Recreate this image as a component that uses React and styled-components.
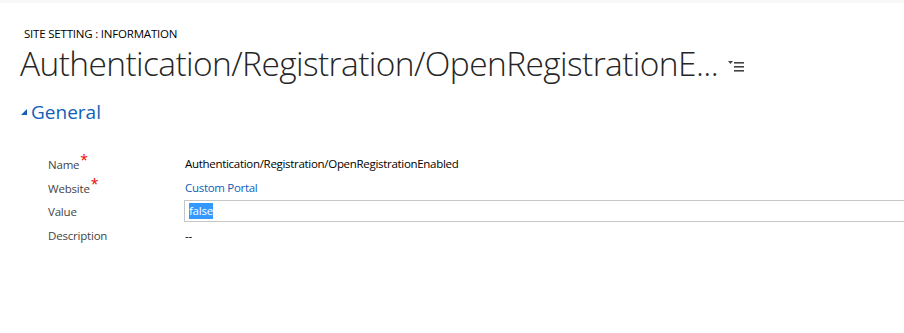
import React from "react";
import styled, { createGlobalStyle } from "styled-components";

const Global = createGlobalStyle`
  html, body { margin: 0; padding: 0; background: #fff; }
  body { font-family: "Segoe UI", "Open Sans", "Liberation Sans", sans-serif; overflow: hidden; }
`;

const Page = styled.div`
  width: 904px;
  height: 333px;
  overflow: hidden;
  background: #fff;
`;

const TopStrip = styled.div`
  height: 3px;
  background: #f8f8f8;
`;

const Header = styled.header`
  padding: 25px 0 0 20px;
`;

const Breadcrumb = styled.div`
  font-size: 11.5px;
  color: #000;
  padding-left: 4px;
  line-height: 12px;
  letter-spacing: -0.2px;
`;

const TitleRow = styled.div`
  display: flex;
  align-items: flex-start;
  gap: 10px;
`;

const Title = styled.h1`
  margin: 0;
  font-family: "Open Sans", sans-serif;
  font-weight: 300;
  font-size: 33.5px;
  line-height: 46px;
  color: #262626;
  letter-spacing: -0.6px;
  white-space: nowrap;
`;

const MenuIcon = styled.svg`
  margin-top: 21px;
  flex: none;
`;

const Section = styled.section`
  padding: 14px 0 0 21px;
`;

const SectionHeader = styled.div`
  display: flex;
  align-items: center;
  gap: 4px;
  color: #1160b7;
  font-size: 19px;
  font-family: "Open Sans", sans-serif;
  line-height: 24px;
`;

const Form = styled.div`
  display: grid;
  grid-template-columns: 137px 1fr;
  grid-auto-rows: 24px;
  align-items: center;
  margin: 27px 0 0 48px;
  font-size: 12px;
`;

const Label = styled.div`
  color: #444;
  font-family: "Open Sans", sans-serif;
  font-size: 11.5px;
  letter-spacing: -0.2px;
`;

const Required = styled.span`
  color: #e00;
  font-size: 14px;
  position: relative;
  top: -4px;
  margin-left: 1px;
`;

const Value = styled.div`
  color: ${(p) => (p.$link ? "#1160b7" : "#000")};
  font-family: "Open Sans", sans-serif;
  font-size: 11.5px;
  letter-spacing: -0.3px;
  white-space: nowrap;
`;

const InputBox = styled.div`
  height: 20px;
  border: 1px solid #c6c6c6;
  border-right: none;
  margin-right: -20px;
  margin-left: -1px;
  display: flex;
  align-items: center;
  padding-left: 4px;
  font-family: "Open Sans", sans-serif;
  font-size: 11.5px;
  letter-spacing: -0.25px;
`;

const Selected = styled.span`
  background: #3399ff;
  color: #fff;
  line-height: 16px;
`;

export default function App() {
  return (
    <Page>
      <Global />
      <TopStrip />
      <Header>
        <Breadcrumb>SITE SETTING : INFORMATION</Breadcrumb>
        <TitleRow>
          <Title>Authentication/Registration/OpenRegistrationE...</Title>
          <MenuIcon width="17" height="12" viewBox="0 0 17 12">
            <polygon points="0,0 5,0 2.5,3" fill="#444" />
            <rect x="6" y="1" width="10" height="1.6" fill="#444" />
            <rect x="6" y="5" width="10" height="1.6" fill="#444" />
            <rect x="6" y="9" width="10" height="1.6" fill="#444" />
          </MenuIcon>
        </TitleRow>
      </Header>
      <Section>
        <SectionHeader>
          <svg width="6" height="6" viewBox="0 0 6 6">
            <polygon points="6,0 6,6 0,6" fill="#1160b7" />
          </svg>
          General
        </SectionHeader>
      </Section>
      <Form>
        <Label>Name<Required>*</Required></Label>
        <Value>Authentication/Registration/OpenRegistrationEnabled</Value>
        <Label>Website<Required>*</Required></Label>
        <Value $link>Custom Portal</Value>
        <Label>Value</Label>
        <InputBox><Selected>false</Selected></InputBox>
        <Label>Description</Label>
        <Value>--</Value>
      </Form>
    </Page>
  );
}
